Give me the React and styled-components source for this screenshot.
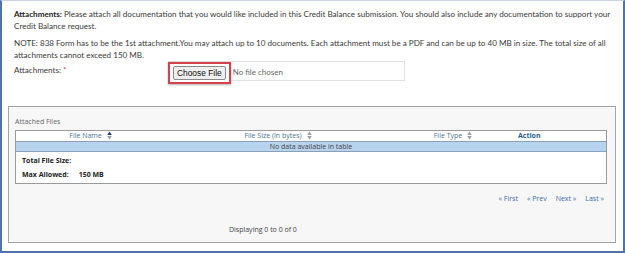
import React from "react";
import styled, { createGlobalStyle } from "styled-components";

const Global = createGlobalStyle`
  html, body { margin: 0; padding: 0; background: #fff; }
  body { font-family: "Open Sans", "Noto Sans", sans-serif; }
  * { box-sizing: border-box; }
`;

const Frame = styled.div`
  width: 625px;
  height: 253px;
  border: 2px solid #4f74ab;
  border-top: 1px solid #c9d3e2;
  padding: 7px 6px 6px 6px;
  display: flex;
  flex-direction: column;
  color: #333;
`;

const Intro = styled.div`
  padding: 0 4px 0 6px;
  font-family: Lato, "Open Sans", sans-serif;
  font-size: 8.1px;
  line-height: 12.4px;
  color: #3a3a3a;
`;

const Para = styled.p`
  margin: 0;
  & + & { margin-top: 4px; }
`;

const Strong = styled.b`
  font-weight: 700;
  color: #222;
`;

const FieldRow = styled.div`
  display: flex;
  align-items: flex-start;
  padding-left: 6px;
  margin-top: -1px;
  height: 24px;
`;

const Label = styled.span`
  width: 154px;
  font-family: Lato, "Open Sans", sans-serif;
  font-size: 8.1px;
  line-height: 12px;
  color: #3a3a3a;
  padding-top: 3px;
`;

const Req = styled.span`
  color: #c0504d;
`;

const FileBox = styled.div`
  width: 237px;
  height: 20px;
  border: 1px solid #e2e2e2;
  display: flex;
  align-items: flex-start;
  background: #fff;
`;

const Highlight = styled.div`
  margin-left: -1px;
  border: 2px solid #d2424f;
  padding: 2px 3px;
  display: flex;
  align-items: center;
  box-shadow: 0 1px 2px rgba(0,0,0,0.3);
  background: #fff;
`;

const ChooseBtn = styled.span`
  font-family: "Liberation Sans", Arial, sans-serif;
  font-size: 8.4px;
  color: #111;
  background: #efefef;
  border: 1px solid #8a8a8a;
  border-radius: 2px;
  padding: 1px 3px;
  line-height: 10px;
`;

const NoFile = styled.span`
  font-family: Lato, "Open Sans", sans-serif;
  font-size: 8px;
  line-height: 10px;
  color: #666;
  margin-left: 2px;
  margin-top: 5px;
`;

const Panel = styled.div`
  margin-top: 21px;
  margin-right: 1px;
  height: 137px;
  border: 1px solid #a3a3a3;
  background: #f7f7f7;
  padding: 10px 8px 0 6px;
  display: flex;
  flex-direction: column;
`;

const PanelTitle = styled.div`
  font-size: 7px;
  color: #666;
  line-height: 9px;
  margin-bottom: 4px;
`;

const Table = styled.div`
  border: 1px solid #9a9a9a;
  background: #fff;
  height: 54px;
  display: flex;
  flex-direction: column;
`;

const HeadRow = styled.div`
  display: grid;
  grid-template-columns: 149px 226px 124px 1fr;
  height: 11px;
  align-items: center;
  border-bottom: 1px solid #8aa0b8;
`;

const HeadCell = styled.div`
  display: flex;
  align-items: center;
  justify-content: ${p => p.$align || "center"};
  padding-left: ${p => p.$pl || 0}px;
  font-size: 7px;
  line-height: 9px;
  color: ${p => (p.$bold ? "#1f5f8f" : "#4d7595")};
  font-weight: ${p => (p.$bold ? 700 : 400)};
`;

const Sort = styled.svg`
  width: 5px;
  height: 9px;
  margin-left: 5px;
`;

const EmptyRow = styled.div`
  background: #b8d3ee;
  height: 10px;
  border-bottom: 1px solid #8aa0b8;
  text-align: center;
  font-size: 7px;
  line-height: 9px;
  color: #444;
`;

const Summary = styled.div`
  padding: 4px 6px 0;
  display: flex;
  flex-direction: column;
  gap: 5px;
  font-size: 7px;
  line-height: 9px;
  font-weight: 700;
  color: #222;
`;

const Value = styled.span`
  margin-left: 10px;
`;

const Pager = styled.div`
  display: flex;
  justify-content: flex-end;
  gap: 9px;
  padding-right: 3px;
  margin-top: 10px;
  font-size: 7px;
  line-height: 9px;
`;

const PageLink = styled.span`
  color: #3a6cae;
`;

const Displaying = styled.div`
  margin-top: 22px;
  padding-left: 214px;
  font-size: 7px;
  line-height: 9px;
  color: #444;
`;

const SortIcon = ({ active }) => (
  <Sort viewBox="0 0 5 9">
    <path d="M2.5 0.5 L4.8 4 L0.2 4 Z" fill={active ? "#1d3d86" : "#9aa0a8"} />
    <path d="M2.5 8.5 L4.8 5 L0.2 5 Z" fill="#9aa0a8" />
  </Sort>
);

export default function App() {
  return (
    <>
      <Global />
      <Frame>
        <Intro>
          <Para>
            <Strong>Attachments:</Strong> Please attach all documentation that you would like included in this Credit Balance submission. You should also include any documentation to support your Credit Balance request.
          </Para>
          <Para>
            NOTE: 838 Form has to be the 1st attachment.You may attach up to 10 documents. Each attachment must be a PDF and can be up to 40 MB in size. The total size of all attachments cannot exceed 150 MB.
          </Para>
        </Intro>
        <FieldRow>
          <Label>Attachments: <Req>*</Req></Label>
          <FileBox>
            <Highlight>
              <ChooseBtn>Choose File</ChooseBtn>
            </Highlight>
            <NoFile>No file chosen</NoFile>
          </FileBox>
        </FieldRow>
        <Panel>
          <PanelTitle>Attached Files</PanelTitle>
          <Table>
            <HeadRow>
              <HeadCell>File Name<SortIcon active /></HeadCell>
              <HeadCell>File Size (in bytes)<SortIcon /></HeadCell>
              <HeadCell>File Type<SortIcon /></HeadCell>
              <HeadCell $bold $align="flex-start" $pl={3}>Action</HeadCell>
            </HeadRow>
            <EmptyRow>No data available in table</EmptyRow>
            <Summary>
              <span>Total File Size:</span>
              <span>Max Allowed:<Value>150 MB</Value></span>
            </Summary>
          </Table>
          <Pager>
            <PageLink>« First</PageLink>
            <PageLink>« Prev</PageLink>
            <PageLink>Next »</PageLink>
            <PageLink>Last »</PageLink>
          </Pager>
          <Displaying>Displaying 0 to 0 of 0</Displaying>
        </Panel>
      </Frame>
    </>
  );
}
